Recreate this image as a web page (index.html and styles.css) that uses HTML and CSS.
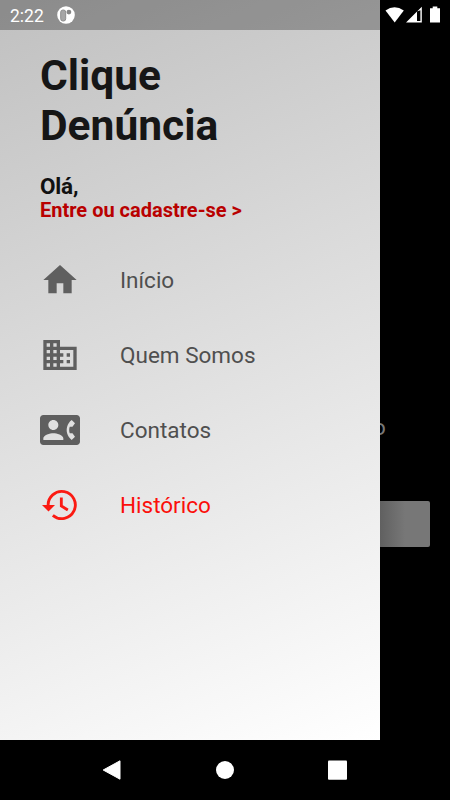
FILE: index.html
```html
<!DOCTYPE html>
<html lang="pt-BR">
<head>
<meta charset="utf-8">
<title>Clique Denúncia</title>
<link rel="stylesheet" href="styles.css">
</head>
<body>
<div class="screen">
  <main class="content">
    <aside class="drawer">
      <h1 class="title">Clique<br>Denúncia</h1>
      <p class="hello">Olá,</p>
      <a class="login">Entre ou cadastre-se &gt;</a>
      <nav class="menu">
        <a class="item"><svg class="icon" viewBox="0 0 24 24"><path d="M10 20v-6h4v6h5v-8h3L12 3 2 12h3v8z"/></svg><span>Início</span></a>
        <a class="item"><svg class="icon" viewBox="0 0 24 24"><path d="M12 7V3H2v18h20V7H12zM6 19H4v-2h2v2zm0-4H4v-2h2v2zm0-4H4V9h2v2zm0-4H4V5h2v2zm4 12H8v-2h2v2zm0-4H8v-2h2v2zm0-4H8V9h2v2zm0-4H8V5h2v2zm10 12h-8v-2h2v-2h-2v-2h2v-2h-2V9h8v10zm-2-8h-2v2h2v-2zm0 4h-2v2h2v-2z"/></svg><span>Quem Somos</span></a>
        <a class="item"><svg class="icon" viewBox="0 0 24 24"><path d="M22 3H2C.9 3 0 3.9 0 5v14c0 1.1.9 2 2 2h20c1.1 0 1.99-.9 1.99-2L24 5c0-1.1-.9-2-2-2zM8 6c1.66 0 3 1.34 3 3s-1.34 3-3 3-3-1.34-3-3 1.34-3 3-3zm6 12H2v-1c0-2 4-3.1 6-3.1s6 1.1 6 3.1v1zm3.85-4h1.64L21 16l-1.99 1.99c-1.31-.98-2.28-2.38-2.73-3.99-.18-.64-.28-1.31-.28-2s.1-1.36.28-2c.45-1.62 1.42-3.01 2.73-3.99L21 8l-1.51 2h-1.64c-.22.63-.35 1.3-.35 2s.13 1.37.35 2z"/></svg><span>Contatos</span></a>
        <a class="item active"><svg class="icon" viewBox="0 0 24 24"><path class="line" d="M4.900 12.600A8.150 8.150 0 1 1 7.700 18.200M12.800 7.500V12.600L16.700 15"/><path d="M1.200 12H9L5.100 15.900z"/></svg><span>Histórico</span></a>
      </nav>
    </aside>
    <section class="page">
      <div class="label">o</div>
      <div class="button"></div>
    </section>
  </main>
  <header class="status">
    <span class="time">2:22</span>
    <svg class="app" viewBox="0 0 18 18"><circle cx="9" cy="9" r="8.8" fill="#fff"/><rect x="3.700" y="4" width="5" height="11" rx="2.200" fill="#a6a6a6" stroke="#8e8e8e" stroke-width="1"/><circle cx="11.900" cy="6.100" r="2.400" fill="#858585"/></svg>
    <svg class="signals" viewBox="0 0 56 18"><path d="M.5 4.400Q9.500-2 18.800 4.400L9.700 16.500z"/><path d="M21 16.500 36.800.8V16.500zM32 5.600V15h3.400V4.200z" fill-rule="evenodd"/><path d="M45 2.200h2.700V.5h4.600V2.200H55V16.500H45z"/></svg>
  </header>
  <footer class="navbar">
    <svg viewBox="0 0 20 22"><path d="M18 1.800V20.200L1.200 11z" stroke="#fff" stroke-linejoin="round"/></svg>
    <svg viewBox="0 0 20 22"><circle cx="10" cy="11" r="9"/></svg>
    <svg viewBox="0 0 20 22"><rect x="0" y="1.500" width="19" height="19.300" rx="1"/></svg>
  </footer>
</div>
</body>
</html>
```
FILE: styles.css
```css
* { box-sizing: border-box; }
body { margin: 0; background: #000; font-family: Roboto, sans-serif; }
.screen { position: relative; display: flex; flex-direction: column; width: 450px; height: 800px; overflow: hidden; }
.content { display: flex; height: 740px; }
.drawer { width: 380px; padding: 51px 40px 0; background: linear-gradient(157deg, #c0c0c0, #fff); }
.title { margin: 0; font-size: 42.5px; line-height: 50px; font-weight: 700; color: #161616; }
.hello { margin: 23px 0 0; font-size: 22.5px; line-height: 25px; font-weight: 700; color: #111; letter-spacing: -.2px; }
.login { display: block; height: 24px; font-size: 20px; line-height: 23px; font-weight: 700; color: #b90000; }
.menu { margin-top: 19px; }
.item { display: flex; align-items: center; gap: 40px; height: 75px; font-size: 22.5px; color: #4f4f4f; }
.icon { width: 40px; height: 40px; fill: #5f5f5f; }
.active { color: #fb0f0b; }
.active .icon { fill: #fb1a12; }
.line { fill: none; stroke: #fb1a12; stroke-width: 1.7; }
.page { flex: 1; padding-top: 412px; overflow: hidden; }
.label { height: 89px; margin-left: -7px; font-size: 22.5px; line-height: 30px; color: #777; clip-path: inset(0 0 0 7px); }
.button { width: 50px; height: 46px; border-radius: 0 2px 2px 0; background: linear-gradient(90deg, #606060, #777 50%); }
.status { position: absolute; inset: 0 0 auto; display: flex; align-items: center; height: 30px; padding-left: 10px; background: linear-gradient(90deg, #0000 380px, #000 380px), rgba(0, 0, 0, .27); color: #fff; }
.time { width: 47px; font-size: 17.5px; line-height: 22px; padding-top: 1px; }
.app { width: 18px; height: 18px; }
.signals { width: 56px; height: 18px; margin-left: 310px; fill: #fff; }
.navbar { display: flex; justify-content: center; align-items: center; gap: 93px; height: 60px; background: #000; }
.navbar svg { width: 20px; height: 22px; fill: #fff; }
```
